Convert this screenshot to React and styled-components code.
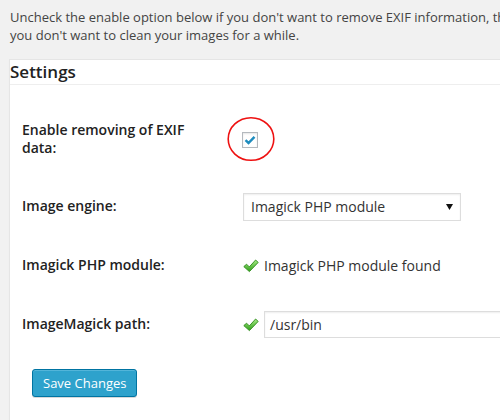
import React from 'react'
import styled, { createGlobalStyle } from 'styled-components'

const GlobalStyle = createGlobalStyle`
    html, body {
        margin: 0;
        padding: 0;
        background: #f1f1f1;
        overflow: hidden;
    }
    body {
        font-family: "Open Sans", "Liberation Sans", sans-serif;
        color: #444;
    }
`;

const Page = styled.div`
    width: 700px;
    padding: 8px 0 0 9px;
`;

const Intro = styled.p`
    margin: 0 0 15px 1px;
    font-size: 13px;
    line-height: 18px;
    color: #444;
    white-space: nowrap;
`;

const Panel = styled.section`
    background: #fff;
    border: 1px solid #e5e5e5;
    box-shadow: 0 1px 1px rgba(0, 0, 0, 0.04);
    min-height: 420px;
`;

const PanelTitle = styled.h3`
    margin: 0;
    padding: 0;
    font-size: 17px;
    line-height: 24px;
    font-weight: 600;
    color: #222;
    border-bottom: 1px solid #eee;
`;

const PanelBody = styled.div`
    padding: 16px 12px 12px;
`;

const Row = styled.div`
    display: grid;
    grid-template-columns: 220px 1fr;
    align-items: center;
`;

const Label = styled.div`
    align-self: start;
    padding: ${p => p.$tall ? '20px 30px 20px 0' : '20px 10px 21px 0'};
    font-size: 14px;
    line-height: 18px;
    font-weight: 600;
    color: #222;
`;

const Field = styled.div`
    display: flex;
    align-items: center;
    gap: 5px;
    font-size: 14px;
    line-height: 18px;
    color: #333;
`;

const CheckWrap = styled.span`
    position: relative;
    display: inline-flex;
    margin-top: 2px;
`;

const CheckBox = styled.span`
    display: inline-flex;
    align-items: center;
    justify-content: center;
    width: 14px;
    height: 14px;
    border: 1px solid #b4b9be;
    background: #fff;
    box-shadow: inset 0 1px 2px rgba(0, 0, 0, 0.1);
`;

const Circle = styled.svg`
    position: absolute;
    left: -15px;
    top: -16px;
    pointer-events: none;
`;

const Select = styled.div`
    box-sizing: border-box;
    display: flex;
    align-items: center;
    justify-content: space-between;
    width: 218px;
    height: 28px;
    margin-left: 1px;
    padding: 0 7px;
    border: 1px solid #ddd;
    background: #fff;
    box-shadow: inset 0 1px 2px rgba(0, 0, 0, 0.07);
    font-size: 14px;
    color: #333;
`;

const Input = styled.div`
    box-sizing: border-box;
    width: 325px;
    height: 27px;
    padding: 0 5px;
    border: 1px solid #ddd;
    background: #fff;
    box-shadow: inset 0 1px 2px rgba(0, 0, 0, 0.07);
    font-size: 14px;
    line-height: 25px;
    color: #333;
`;

const Submit = styled.div`
    margin: 15px 0 0 10px;
`;

const Button = styled.button`
    height: 28px;
    padding: 0 10px 1px;
    border: 1px solid #0074a2;
    border-radius: 3px;
    background: #2ea2cc;
    box-shadow: inset 0 1px 0 rgba(120, 200, 230, 0.5), 0 1px 0 rgba(0, 0, 0, 0.15);
    color: #fff;
    font-family: "Open Sans", "Liberation Sans", sans-serif;
    font-size: 13px;
    line-height: 26px;
    cursor: pointer;
`;

function GreenCheck() {
    return (
        <svg width="16" height="14" viewBox="0 0 16 14" style={{ marginLeft: 1 }}>
            <defs>
                <linearGradient id="gc" x1="0" y1="0" x2="0" y2="1">
                    <stop offset="0" stopColor="#a6ec84" />
                    <stop offset="1" stopColor="#2f9e19" />
                </linearGradient>
            </defs>
            <path
                d="M0.8 7.6 L3.6 5.2 L6.3 7.9 L12.6 1 L15.2 3.4 L6.4 12.6 Z"
                fill="url(#gc)"
                stroke="#2b8a18"
                strokeWidth="0.9"
                strokeLinejoin="round"
            />
        </svg>
    )
}

export default function App() {
    return (
        <>
            <GlobalStyle />
            <Page>
                <Intro>
                    Uncheck the enable option below if you don't want to remove EXIF information, this is useful if
                    <br />
                    you don't want to clean your images for a while.
                </Intro>

                <Panel>
                    <PanelTitle>Settings</PanelTitle>
                    <PanelBody>
                        <Row>
                            <Label $tall>Enable removing of EXIF data:</Label>
                            <Field>
                                <CheckWrap>
                                    <CheckBox>
                                        <svg width="12" height="10" viewBox="0 0 12 10">
                                            <path d="M1.5 5.2 L4.5 8 L10.5 1.8" fill="none" stroke="#1e8cbe" strokeWidth="2.4" />
                                        </svg>
                                    </CheckBox>
                                    <Circle width="48" height="46" viewBox="0 0 48 46">
                                        <ellipse cx="24" cy="23" rx="22.8" ry="21.3" fill="none" stroke="#ee1111" strokeWidth="1.6" />
                                    </Circle>
                                </CheckWrap>
                            </Field>
                        </Row>

                        <Row>
                            <Label>Image engine:</Label>
                            <Field>
                                <Select>
                                    <span>Imagick PHP module</span>
                                    <svg width="7" height="6" viewBox="0 0 7 6">
                                        <path d="M0 0 H7 L3.5 6 Z" fill="#111" />
                                    </svg>
                                </Select>
                            </Field>
                        </Row>

                        <Row>
                            <Label>Imagick PHP module:</Label>
                            <Field>
                                <GreenCheck />
                                <span>Imagick PHP module found</span>
                            </Field>
                        </Row>

                        <Row>
                            <Label>ImageMagick path:</Label>
                            <Field>
                                <GreenCheck />
                                <Input>/usr/bin</Input>
                            </Field>
                        </Row>

                        <Submit>
                            <Button>Save Changes</Button>
                        </Submit>
                    </PanelBody>
                </Panel>
            </Page>
        </>
    )
}
